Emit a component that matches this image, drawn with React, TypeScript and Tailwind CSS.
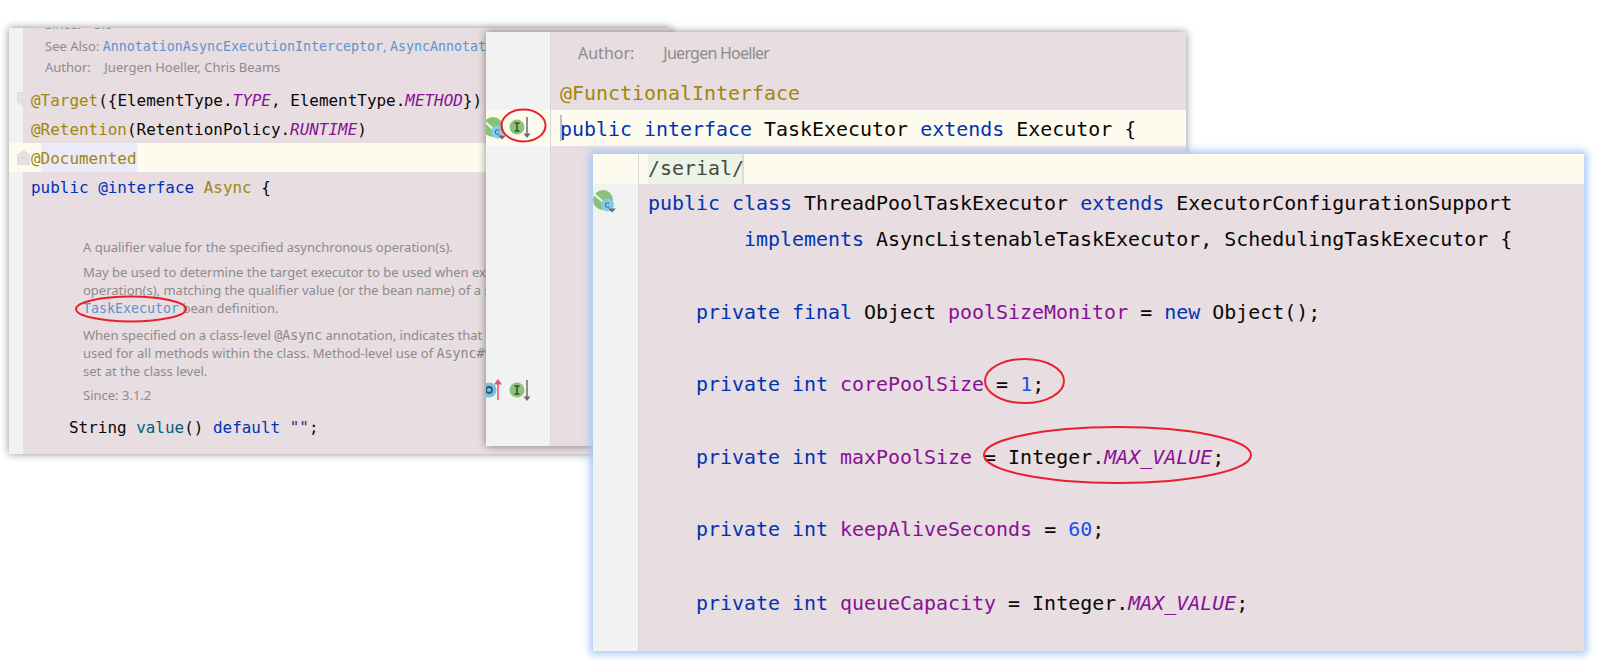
import React from "react";

const Kw = (props: any) => <span className="text-[#0033b3]">{props.children}</span>;
const Ann = (props: any) => <span className="text-[#9e880d]">{props.children}</span>;
const Fld = (props: any) => <span className="text-[#871094]">{props.children}</span>;
const Stat = (props: any) => <span className="text-[#871094] italic">{props.children}</span>;
const Num = (props: any) => <span className="text-[#1750eb]">{props.children}</span>;
const DocCode = (props: any) => <span className="font-['DejaVu_Sans_Mono',monospace] text-[13.3px] leading-none text-[#8a8a8a]">{props.children}</span>;
const DocLink = (props: any) => <span className="font-['DejaVu_Sans_Mono',monospace] text-[13.3px] leading-none text-[#5b93cf]">{props.children}</span>;

// green leaf + blue "c" badge with the small down arrow
function ClassMark({ x, y }: { x: number; y: number }) {
  return (
    <g transform={`translate(${x} ${y})`}>
      <circle cx="0" cy="0" r="10" fill="#8cc07a" />
      <path d="M-9 -6 L8 9" stroke="#f2f6ea" strokeWidth="2.2" />
      <circle cx="4.5" cy="5" r="6.5" fill="#82cdec" />
      <path d="M6.3 3.4 A2.3 2.3 0 1 0 6.3 6.6" fill="none" stroke="#4f6c7a" strokeWidth="1.1" />
      <path d="M5 8.5 H13 L9 12.5 Z" fill="#6a6a6a" />
    </g>
  );
}

function ImplMark({ x, y }: { x: number; y: number }) {
  return (
    <g transform={`translate(${x} ${y})`}>
      <circle cx="0" cy="0" r="7.5" fill="#8cc379" />
      <path d="M-2.5 -4 H2.5 M0 -4 V4 M-2.5 4 H2.5" stroke="#3f4a3a" strokeWidth="1.5" fill="none" />
      <path d="M10 -10 V7" stroke="#6b6b6b" strokeWidth="1.5" />
      <path d="M6.5 6.5 H13.5 L10 11 Z" fill="#6b6b6b" />
    </g>
  );
}

function Fold({ up }: { up?: boolean }) {
  return (
    <svg width="13" height="15" viewBox="0 0 13 15" className="absolute left-[8px] top-[7px]">
      {up ? (
        <path d="M0.5 14.5 V5 L6.5 0.5 L12.5 5 V14.5 Z" fill="#e6e2e4" stroke="#dedade" />
      ) : (
        <path d="M0.5 0.5 H12.5 V10 L6.5 14.5 L0.5 10 Z" fill="#e6e2e4" stroke="#dedade" />
      )}
      <path d="M3.5 8 H9.5" stroke="#cfcbcf" />
    </svg>
  );
}

function TargetWindow() {
  return (
    <div className="absolute left-[9px] top-[28px] w-[662px] h-[426px] overflow-hidden flex bg-[#e8dde1] shadow-[0_0_8px_rgba(0,0,0,0.45)]">
      <div className="w-[14px] shrink-0 bg-[#f2f2f2] flex flex-col">
        <div className="h-[115px] shrink-0" />
        <div className="h-[29px] shrink-0 bg-[#fdfbee]" />
      </div>
      <div className="flex-1 min-w-0 whitespace-nowrap">
        <div className="h-[57px] ml-[8px] -mt-[14px] border-l-[3px] border-[#e2dfe2] pl-[11px] text-[13px] leading-[21.5px] font-['Noto_Sans',sans-serif] text-[#8c8c8c] box-content pb-[14px]">
          <div>Since:&nbsp;&nbsp;&nbsp;&nbsp;3.0</div>
          <div>
            See Also: <DocLink>AnnotationAsyncExecutionInterceptor</DocLink><span className="text-[#5b93cf]">, </span>
            <DocLink>AsyncAnnotationBeanPostProcessor</DocLink>
          </div>
          <div>Author:&nbsp;&nbsp;&nbsp;&nbsp;Juergen Hoeller, Chris Beams</div>
        </div>
        <div className="font-['DejaVu_Sans_Mono',monospace] text-[15.95px] leading-[31px] text-[#080808]">
          <div className="relative -ml-[14px] pl-[22px] h-[29px]">
            <Fold />
            <Ann>@Target</Ann>({"{"}ElementType.<Stat>TYPE</Stat>, ElementType.<Stat>METHOD</Stat>{"}"})
          </div>
          <div className="pl-[8px] h-[29px]">
            <Ann>@Retention</Ann>(RetentionPolicy.<Stat>RUNTIME</Stat>)
          </div>
          <div className="relative -ml-[14px] pl-[22px] h-[29px] bg-[#fdfbee]">
            <Fold up />
            <Ann>@</Ann><span className="inline-block h-[29px] bg-[#edeaf8]"><Ann>Documented</Ann></span>
          </div>
          <div className="pl-[8px] h-[29px]">
            <Kw>public @interface</Kw> <Ann>Async</Ann> {"{"}
          </div>
        </div>
        <div className="mt-[32px] ml-[46px] h-[175px] border-l-[3px] border-[#e2dfe2] pl-[11px] pt-[5px] text-[13px] leading-[18px] font-['Noto_Sans',sans-serif] text-[#8c8c8c]">
          <p>A qualifier value for the specified asynchronous operation(s).</p>
          <p className="mt-[7px]">
            May be used to determine the target executor to be used when executing this particular async
            <br />
            operation(s), matching the qualifier value (or the bean name) of a specific Executor or
            <br />
            <DocLink>TaskExecutor</DocLink> bean definition.
          </p>
          <p className="mt-[9px]">
            When specified on a class-level <DocCode>@Async</DocCode> annotation, indicates that the given executor should be
            <br />
            used for all methods within the class. Method-level use of <DocCode>Async#value</DocCode> always overrides any value
            <br />
            set at the class level.
          </p>
          <p className="mt-[6px]">Since: 3.1.2</p>
        </div>
        <div className="mt-[5px] pl-[46px] font-['DejaVu_Sans_Mono',monospace] text-[15.95px] leading-[29px] text-[#080808]">
          String <span className="text-[#00627a]">value</span>() <Kw>default</Kw> <span className="text-[#2a3a5a]">""</span>;
        </div>
      </div>
    </div>
  );
}

function ExecutorWindow() {
  return (
    <div className="absolute left-[486px] top-[32px] w-[700px] h-[414px] overflow-hidden flex bg-[#e8dde1] shadow-[0_0_8px_rgba(0,0,0,0.45)]">
      <div className="w-[65px] shrink-0 bg-[#f2f2f2] border-r border-[#d6d6d6] flex flex-col">
        <div className="h-[78px] shrink-0" />
        <div className="h-[36px] shrink-0 bg-[#fdfbee]">
          <svg width="64" height="36">
            <ClassMark x={7} y={17} />
            <ImplMark x={31} y={17} />
          </svg>
        </div>
        <div className="h-[226px] shrink-0" />
        <svg width="64" height="36" className="shrink-0">
          <circle cx="3" cy="18" r="7.5" fill="#74c3e4" />
          <circle cx="3" cy="18" r="3" fill="none" stroke="#31566a" strokeWidth="1.8" />
          <path d="M12 9 V28" stroke="#e0596a" strokeWidth="1.5" />
          <path d="M8 12.5 H16 L12 7 Z" fill="#e0596a" />
          <ImplMark x={31} y={18} />
        </svg>
      </div>
      <div className="flex-1 min-w-0 whitespace-nowrap">
        <div className="h-[36px] ml-[9px] border-l-[3px] border-[#e2dfe2] pl-[15px] pt-[10px] text-[16px] leading-[22px] font-['Noto_Sans',sans-serif] text-[#8c8c8c]">
          Author:<span className="ml-[29px] tracking-[-0.75px]">Juergen Hoeller</span>
        </div>
        <div className="font-['DejaVu_Sans_Mono',monospace] text-[19.95px] leading-[39px] text-[#080808]">
          <div className="h-[42px] pl-[9px] pt-[6px]">
            <Ann>@FunctionalInterface</Ann>
          </div>
          <div className="h-[36px] pl-[9px] bg-[#fdfbee] relative">
            <span className="absolute left-[9px] top-[5px] w-[2px] h-[26px] bg-[#b9c0cc]" />
            <Kw>public interface</Kw> TaskExecutor <Kw>extends</Kw> Executor {"{"}
          </div>
        </div>
      </div>
    </div>
  );
}

function PoolWindow() {
  return (
    <div className="absolute left-[593px] top-[154px] w-[991px] h-[497px] overflow-hidden flex bg-[#e8dde1] shadow-[0_0_8px_3px_#a5c6f5]">
      <div className="w-[46px] shrink-0 bg-[#f2f2f2] border-r border-[#d6d6d6] flex flex-col">
        <div className="h-[30px] shrink-0 bg-[#fdfbee]" />
        <svg width="45" height="36" className="shrink-0">
          <ClassMark x={10} y={16} />
        </svg>
      </div>
      <div className="flex-1 min-w-0 whitespace-nowrap font-['DejaVu_Sans_Mono',monospace] text-[19.95px] leading-[39px] text-[#080808]">
        <div className="h-[30px] bg-[#fdfbee] leading-[28px] text-[#4a4a3a]">
          <span className="inline-block h-[30px] ml-[9px] w-[96px] bg-[#eaf4e8] border-r-2 border-[#dcdcd0]">/serial/</span>
        </div>
        <div className="pl-[9px]">
          <div className="h-[36px]"><Kw>public class</Kw> ThreadPoolTaskExecutor <Kw>extends</Kw> ExecutorConfigurationSupport</div>
          <div className="h-[36px] pl-[96px]"><Kw>implements</Kw> AsyncListenableTaskExecutor, SchedulingTaskExecutor {"{"}</div>
          <div className="h-[36px] mt-[37px] pl-[48px]"><Kw>private final</Kw> Object <Fld>poolSizeMonitor</Fld> = <Kw>new</Kw> Object();</div>
          <div className="h-[36px] mt-[36px] pl-[48px]"><Kw>private int</Kw> <Fld>corePoolSize</Fld> = <Num>1</Num>;</div>
          <div className="h-[36px] mt-[37px] pl-[48px]"><Kw>private int</Kw> <Fld>maxPoolSize</Fld> = Integer.<Stat>MAX_VALUE</Stat>;</div>
          <div className="h-[36px] mt-[36px] pl-[48px]"><Kw>private int</Kw> <Fld>keepAliveSeconds</Fld> = <Num>60</Num>;</div>
          <div className="h-[36px] mt-[38px] pl-[48px]"><Kw>private int</Kw> <Fld>queueCapacity</Fld> = Integer.<Stat>MAX_VALUE</Stat>;</div>
        </div>
      </div>
    </div>
  );
}

export default function App() {
  return (
    <div className="relative w-[1605px] h-[664px] bg-white overflow-hidden">
      <TargetWindow />
      <ExecutorWindow />
      <PoolWindow />
      {/* red hand drawn rings, they sit over all the windows */}
      <svg width="1605" height="664" className="absolute left-0 top-0 pointer-events-none" fill="none" stroke="#e8202e" strokeWidth="2">
        <ellipse cx="523.5" cy="125.5" rx="22" ry="16" />
        <ellipse cx="131" cy="309" rx="55" ry="12.5" />
        <ellipse cx="1024.5" cy="381" rx="39.5" ry="22" />
        <ellipse cx="1117.5" cy="455" rx="133.5" ry="28" />
      </svg>
    </div>
  );
}
